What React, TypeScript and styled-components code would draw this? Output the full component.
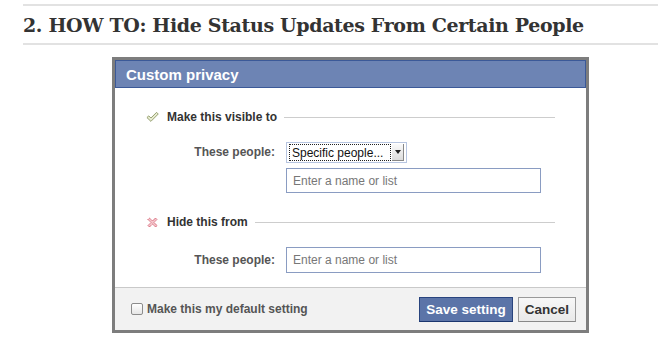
import styled, { createGlobalStyle } from 'styled-components';

const GlobalStyle = createGlobalStyle`
  body {
    margin: 0;
    background: #fff;
    font-family: "Liberation Sans", Arial, sans-serif;
  }
`;

const Article = styled.div`
  padding: 4px 0 0 23px;
`;

const Heading = styled.h2`
  margin: 0;
  height: 37px;
  border-top: 2px solid #e2e2e2;
  border-bottom: 2px solid #e2e2e2;
  display: flex;
  align-items: center;
  font-family: "DejaVu Serif", Georgia, serif;
  font-weight: bold;
  font-size: 19px;
  letter-spacing: -0.35px;
  color: #333;
`;

const Figure = styled.div`
  margin: 12px 0 0 89px;
`;

const Dialog = styled.div`
  width: 471px;
  border: 3px solid #7d7d7d;
  background: #fff;
`;

const TitleBar = styled.div`
  height: 26px;
  background: #6d84b4;
  border: 1px solid #3b5998;
  display: flex;
  align-items: center;
  padding-left: 10px;
  color: #fff;
  font-weight: bold;
  font-size: 15px;
`;

const Body = styled.div`
  padding: 21px 31px 14px 31px;
  display: flex;
  flex-direction: column;
`;

const SectionHead = styled.div<{ $gapTop?: number }>`
  height: 16px;
  display: flex;
  align-items: center;
  margin-top: ${({ $gapTop }) => $gapTop || 0}px;
  font-weight: bold;
  font-size: 12px;
  color: #333;
  &::after {
    content: '';
    flex: 1;
    height: 1px;
    background: #cdcdcd;
    margin-left: 7px;
    margin-top: 1px;
  }
`;

const IconBox = styled.span`
  width: 13px;
  height: 12px;
  margin-right: 8px;
  display: flex;
  align-items: center;
  justify-content: center;
`;

const FieldRow = styled.div`
  margin-top: 17px;
  margin-left: -31px;
  display: grid;
  grid-template-columns: 160px 255px;
  column-gap: 11px;
  align-items: start;
`;

const FieldLabel = styled.label<{ $h: number }>`
  text-align: right;
  line-height: ${({ $h }) => $h}px;
  font-weight: bold;
  font-size: 12px;
  color: #555;
`;

const Controls = styled.div`
  display: flex;
  flex-direction: column;
  gap: 5px;
`;

const SelectBox = styled.div`
  box-sizing: border-box;
  width: 121px;
  height: 21px;
  border: 1px solid #b7c5e0;
  background: #fff;
  display: flex;
  align-items: center;
  padding: 0 2px;
  gap: 1px;
`;

const SelectValue = styled.span`
  flex: 1;
  height: 15px;
  border: 1px dotted #222;
  display: flex;
  align-items: center;
  padding-left: 2px;
  font-size: 12px;
  color: #111;
`;

const SelectArrow = styled.span`
  width: 11px;
  height: 16px;
  background: linear-gradient(#fafafa, #dcdcdc);
  border-right: 1px solid #888;
  border-bottom: 1px solid #888;
  display: flex;
  align-items: center;
  justify-content: center;
  &::before {
    content: '';
    border-left: 3px solid transparent;
    border-right: 3px solid transparent;
    border-top: 4px solid #222;
  }
`;

const TextInput = styled.input<{ $h: number }>`
  box-sizing: border-box;
  width: 255px;
  height: ${({ $h }) => $h}px;
  border: 1px solid #8a9cc2;
  padding: 0 6px;
  font-family: "Liberation Sans", Arial, sans-serif;
  font-size: 12px;
  color: #333;
  outline: none;
  &::placeholder {
    color: #777;
  }
`;

const Footer = styled.div`
  height: 42px;
  border-top: 1px solid #c9c9c9;
  background: #f2f2f2;
  display: flex;
  align-items: center;
  padding: 0 10px 0 16px;
`;

const CheckLabel = styled.label`
  flex: 1;
  display: flex;
  align-items: center;
  gap: 4px;
  font-weight: bold;
  font-size: 12px;
  color: #555;
`;

const CheckBox = styled.input`
  appearance: none;
  margin: 0;
  width: 12px;
  height: 12px;
  border: 1px solid #8c8c8c;
  border-radius: 2px;
  background: linear-gradient(#fff, #e6e6e6);
`;

const Button = styled.button<{ $primary?: boolean }>`
  height: 25px;
  margin-left: 5px;
  padding: 0 6px;
  font-family: "Liberation Sans", Arial, sans-serif;
  font-weight: bold;
  font-size: 13.5px;
  color: ${({ $primary }) => ($primary ? '#fff' : '#333')};
  background: ${({ $primary }) => ($primary ? '#5b74a8' : 'linear-gradient(#f7f7f7, #e9e9e9)')};
  border: 1px solid ${({ $primary }) => ($primary ? '#29447e' : '#999')};
  border-bottom-color: ${({ $primary }) => ($primary ? '#1a356e' : '#888')};
`;

const CheckIcon = () => (
  <svg width="14" height="12" viewBox="0 0 14 12">
    <path d="M1 6.6 L3 4.8 L5.3 7.1 L11.4 1 L13.2 2.8 L5.3 10.7 Z" fill="#e8ecd2" stroke="#8e9866" strokeWidth="1" strokeLinejoin="round" />
  </svg>
);

const CrossIcon = () => (
  <svg width="11" height="11" viewBox="0 0 11 11">
    <path d="M1 2.5 L2.5 1 L5.5 4 L8.5 1 L10 2.5 L7 5.5 L10 8.5 L8.5 10 L5.5 7 L2.5 10 L1 8.5 L4 5.5 Z" fill="#f3c6cc" stroke="#d0465a" strokeWidth="1" strokeDasharray="1 0.6" strokeLinejoin="round" />
  </svg>
);

const App = () => (
  <>
    <GlobalStyle />
    <Article>
      <Heading>2. HOW TO: Hide Status Updates From Certain People</Heading>
      <Figure>
        <Dialog>
          <TitleBar>Custom privacy</TitleBar>
          <Body>
            <SectionHead>
              <IconBox><CheckIcon /></IconBox>
              Make this visible to
            </SectionHead>
            <FieldRow>
              <FieldLabel $h={21}>These people:</FieldLabel>
              <Controls>
                <SelectBox>
                  <SelectValue>Specific people...</SelectValue>
                  <SelectArrow />
                </SelectBox>
                <TextInput $h={25} placeholder="Enter a name or list" />
              </Controls>
            </FieldRow>
            <SectionHead $gapTop={21}>
              <IconBox><CrossIcon /></IconBox>
              Hide this from
            </SectionHead>
            <FieldRow>
              <FieldLabel $h={26}>These people:</FieldLabel>
              <TextInput $h={26} placeholder="Enter a name or list" />
            </FieldRow>
          </Body>
          <Footer>
            <CheckLabel>
              <CheckBox type="checkbox" />
              Make this my default setting
            </CheckLabel>
            <Button $primary>Save setting</Button>
            <Button>Cancel</Button>
          </Footer>
        </Dialog>
      </Figure>
    </Article>
  </>
);

export default App;
